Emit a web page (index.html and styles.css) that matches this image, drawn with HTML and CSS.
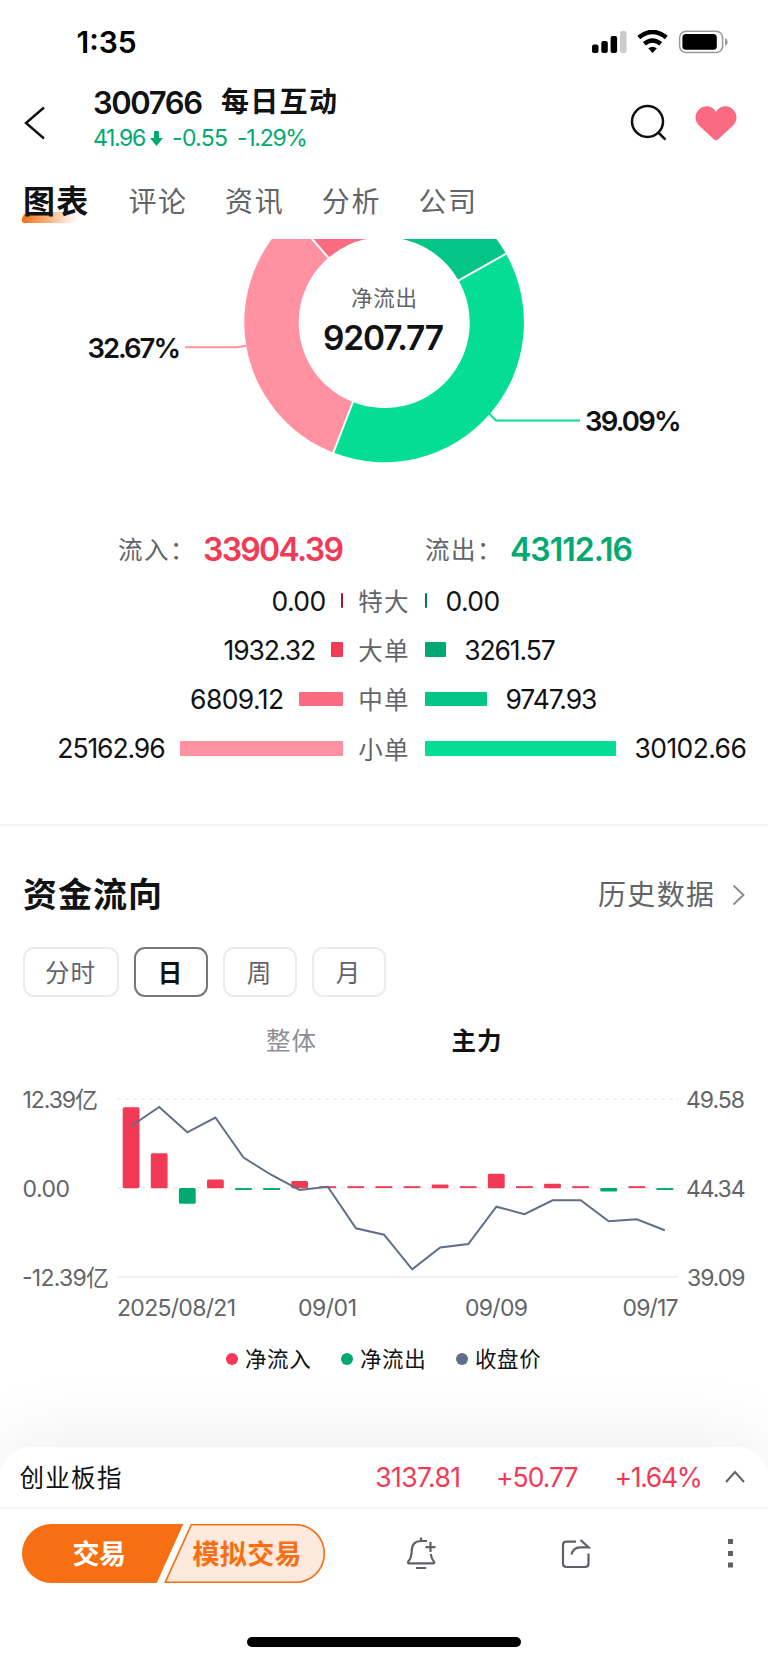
FILE: index.html
```
<!DOCTYPE html>
<html lang="zh-CN">
<head>
<meta charset="utf-8">
<meta name="viewport" content="width=device-width, initial-scale=1.0">
<title>300766 每日互动</title>
<link rel="stylesheet" href="styles.css">
</head>
<body>
<div class="status">
<span class="time">1:35</span>
<svg class="status-icons" width="140" height="24" viewBox="590 30 140 24">
<rect x="592" y="44.500" width="6.500" height="8.500" rx="2"/>
<rect x="601.300" y="41" width="6.500" height="12" rx="2"/>
<rect x="610.600" y="36" width="6.500" height="17" rx="2"/>
<rect x="620" y="31" width="6.500" height="22" rx="2" fill="#ccc"/>
<path d="M638.800 37.500Q652.500 26.500 666.300 37.500" fill="none" stroke="#000" stroke-width="4.600"/>
<path d="M644.300 43.800Q652.500 37 660.800 43.800" fill="none" stroke="#000" stroke-width="4.400"/>
<path d="M648.200 48.300Q652.500 45 656.900 48.300L652.500 53Z"/>
<rect x="679.600" y="31.300" width="43" height="21.300" rx="6.500" fill="none" stroke="#999" stroke-width="1.500"/>
<rect x="682.400" y="34" width="34.400" height="15.800" rx="3.500"/>
<path d="M725 38v8q2.700-1.200 2.700-4t-2.700-4z" fill="#999"/>
</svg>
</div>

<div class="header">
<svg class="back" width="24" height="36" viewBox="0 0 24 36"><path d="M21 2.500L3 18L21 33.500" fill="none" stroke="#111" stroke-width="2.400"/></svg>
<div class="stock">
<div class="stock-name"><span class="code">300766</span><span class="cname">每日互动</span></div>
<div class="quote"><span class="price">41.96</span><svg width="13" height="15" viewBox="0 0 13 15"><path d="M4 1q0-1 1-1h3q1 0 1 1v6h4L6.500 15L0 7h4z" fill="#00a971"/></svg><span class="chg">-0.55</span><span class="pct">-1.29%</span></div>
</div>
<svg class="search" width="38" height="38" viewBox="0 0 38 38"><circle cx="17.500" cy="17.500" r="15.500" fill="none" stroke="#111" stroke-width="2.500"/><path d="M28.300 28.500L35.500 35.700" stroke="#111" stroke-width="2.500"/></svg>
<svg class="heart" width="42" height="35" viewBox="0 0 42 35"><path d="M21 6C17-.8 9-1 4.500 3C-.8 7.500-.6 15 4 19.500L19 33.500Q21 35 23 33.500L38 19.500C42.600 15 42.800 7.500 37.500 3C33-1 25-.8 21 6Z" fill="#fa6a81"/></svg>
</div>

<div class="tabs">
<a class="tab active">图表</a>
<a class="tab">评论</a>
<a class="tab">资讯</a>
<a class="tab">分析</a>
<a class="tab">公司</a>
</div>

<svg class="donut" width="768" height="241" viewBox="0 239 768 241">
<path d="M292.800 216.500A139.800 139.800 0 0 0 333.300 452.600L352.900 402A85.300 85.300 0 0 1 328.500 257.800Z" fill="#ff91a1"/>
<path d="M292.800 216.500A139.800 139.800 0 0 1 384.200 182.500V237.200A85.300 85.300 0 0 0 328.500 257.800Z" fill="#fa6a81"/>
<path d="M384.200 182.500A139.800 139.800 0 0 1 506 253.800L458.600 280.600A85.300 85.300 0 0 0 384.200 237.200Z" fill="#04c585"/>
<path d="M506 253.800A139.800 139.800 0 0 1 333.300 452.600L352.900 402A85.300 85.300 0 0 0 458.600 280.600Z" fill="#04dd94"/>
<path d="M292 215.700L329.200 258.700M333 453.500L353.300 401M507 253.200L457.500 281.200" stroke="#fff" stroke-width="2"/>
<path d="M185 347.300H237L246 345.800" fill="none" stroke="#ff91a1" stroke-width="1.900"/>
<path d="M489.500 414L496 420.500H580" fill="none" stroke="#04dd94" stroke-width="1.900"/>
<text class="donut-label" x="351" y="306" textLength="66">净流出</text>
<text class="donut-total" x="323" y="349.500" textLength="121">9207.77</text>
<text class="donut-pct" x="87.500" y="357.500" textLength="93.500">32.67%</text>
<text class="donut-pct" x="585" y="430.500" textLength="96.500">39.09%</text>
</svg>

<div class="totals">
<div class="total"><span class="label">流入：</span><b class="in">33904.39</b></div>
<div class="total"><span class="label">流出：</span><b class="out">43112.16</b></div>
</div>

<div class="orders">
<div class="order">
<div class="side left"><span>0.00</span><i class="bar r1" style="width:2px"></i></div>
<span class="kind">特大</span>
<div class="side"><i class="bar g1" style="width:2px"></i><span>0.00</span></div>
</div>
<div class="order">
<div class="side left"><span class="tight">1932.32</span><i class="bar r2" style="width:12.500px"></i></div>
<span class="kind">大单</span>
<div class="side"><i class="bar g2" style="width:20.700px"></i><span class="tight">3261.57</span></div>
</div>
<div class="order">
<div class="side left"><span>6809.12</span><i class="bar r3" style="width:44px"></i></div>
<span class="kind">中单</span>
<div class="side"><i class="bar g3" style="width:62px"></i><span class="tight">9747.93</span></div>
</div>
<div class="order">
<div class="side left"><span class="tight">25162.96</span><i class="bar r4" style="width:163px"></i></div>
<span class="kind">小单</span>
<div class="side"><i class="bar g4" style="width:191px"></i><span>30102.66</span></div>
</div>
</div>

<div class="flow">
<div class="flow-head">
<h2>资金流向</h2>
<a class="history">历史数据<svg width="13" height="22" viewBox="0 0 13 22"><path d="M1.500 1.500L11.500 11L1.500 20.500" fill="none" stroke="#85878c" stroke-width="1.800"/></svg></a>
</div>
<div class="periods">
<a class="period wide">分时</a>
<a class="period on">日</a>
<a class="period">周</a>
<a class="period">月</a>
</div>
<div class="scope"><span>整体</span><span class="on">主力</span></div>
<svg class="chart" width="768" height="250" viewBox="0 1080 768 250">
<path d="M117 1099H678M117 1188H678" stroke="#ededee" stroke-width="1.500" stroke-dasharray="4 4"/>
<path d="M117 1277H678" stroke="#ededee" stroke-width="1.500"/>
<g fill="#f23a56">
<rect x="122.700" y="1107.300" width="16.800" height="81" rx="1.500"/>
<rect x="150.800" y="1153.200" width="16.800" height="35" rx="1.500"/>
<rect x="207" y="1179.500" width="16.800" height="8.700" rx="1.500"/>
<rect x="291.200" y="1181" width="16.800" height="7.200" rx="1.500"/>
<rect x="319.300" y="1186.200" width="16.800" height="1.900"/>
<rect x="347.400" y="1186.200" width="16.800" height="1.900"/>
<rect x="375.500" y="1186.200" width="16.800" height="1.900"/>
<rect x="403.600" y="1186.200" width="16.800" height="1.900"/>
<rect x="431.700" y="1184.600" width="16.800" height="3.600" rx="1"/>
<rect x="459.800" y="1186.200" width="16.800" height="1.900"/>
<rect x="487.900" y="1173.700" width="16.800" height="14.500" rx="1.500"/>
<rect x="516" y="1186.200" width="16.800" height="1.900"/>
<rect x="544.100" y="1183.700" width="16.800" height="4.500" rx="1"/>
<rect x="572.200" y="1186.200" width="16.800" height="1.900"/>
<rect x="628.400" y="1186.200" width="16.800" height="1.900"/>
</g>
<g fill="#00a971">
<rect x="178.900" y="1188" width="16.800" height="15.700" rx="1.500"/>
<rect x="235.100" y="1188.100" width="16.800" height="1.900"/>
<rect x="263.200" y="1188.100" width="16.800" height="1.900"/>
<rect x="600.300" y="1188" width="16.800" height="3.600" rx="1"/>
<rect x="656.500" y="1188.100" width="16.800" height="1.900"/>
</g>
<polyline points="131.300,1126 159.200,1107 187.300,1132.300 215.400,1117.500 243.500,1157.500 271.500,1175 299.600,1190 327.800,1186.800 356,1228.300 384,1234.700 412.200,1269.300 440.200,1247.500 468.300,1244 496.400,1206.700 524.500,1214.200 552.600,1200.300 580.700,1200.300 608.700,1221.200 636.800,1219.200 664.800,1230.200" fill="none" stroke="#5f6f89" stroke-width="2"/>
<g class="axis">
<text x="22.500" y="1108" textLength="75.500">12.39亿</text>
<text x="22.500" y="1197" textLength="47.500">0.00</text>
<text x="22" y="1286" textLength="87">-12.39亿</text>
<text x="686" y="1108" textLength="59">49.58</text>
<text x="686" y="1197" textLength="59.500">44.34</text>
<text x="687" y="1286" textLength="58.500">39.09</text>
<text x="117" y="1316" textLength="119">2025/08/21</text>
<text x="298" y="1316" textLength="59">09/01</text>
<text x="465" y="1316" textLength="63">09/09</text>
<text x="622.500" y="1316" textLength="56">09/17</text>
</g>
</svg>
<div class="legend">
<span><i class="dot red"></i>净流入</span>
<span><i class="dot green"></i>净流出</span>
<span><i class="dot blue"></i>收盘价</span>
</div>
</div>

<div class="footer">
<div class="index">
<span class="index-name">创业板指</span>
<span class="v1">3137.81</span><span class="v2">+50.77</span><span class="v3">+1.64%</span>
<svg width="20" height="13" viewBox="0 0 20 13"><path d="M1 12L10 2L19 12" fill="none" stroke="#5f6167" stroke-width="2"/></svg>
</div>
<div class="actions">
<svg class="trade" width="304" height="60" viewBox="22 1524 304 60">
<path d="M51.500 1524H183.300L156.700 1583H51.500A29.500 29.500 0 0 1 51.500 1524Z" fill="#f66f12"/>
<path d="M191.300 1524.700H295.500A28.700 28.700 0 0 1 295.500 1582.300H165.200Z" fill="#fde9dd" stroke="#f66f12" stroke-width="1.600"/>
<text x="72.500" y="1563.500" textLength="53.500" fill="#fff">交易</text>
<text x="192.500" y="1563.500" textLength="109" fill="#f66f12">模拟交易</text>
</svg>
<svg class="bell" width="32" height="36" viewBox="406 1536 32 36"><g fill="none" stroke="#5f6167" stroke-width="2.200"><path d="M421 1537.500V1541M427 1541H421Q412 1541 411.700 1551C411.600 1558 410 1559.500 408.200 1561.700Q407.500 1563.400 409.500 1563.400H433Q435 1563.400 434 1561.700C432.500 1560 431 1557.500 430.800 1554M416 1568H426M425.500 1547.200H435.500M430.500 1542V1552"/></g></svg>
<svg class="share" width="30" height="32" viewBox="561 1538 30 32"><g fill="none" stroke="#5f6167" stroke-width="2.200"><path d="M576 1541.700H566.500Q563 1541.700 563 1545V1563.500Q563 1567 566.500 1567H585Q588.500 1567 588.500 1563.500V1553.500M580.500 1540L588.500 1547.300H580Q573 1547.500 571.500 1554.500"/></g></svg>
<svg class="more" width="5" height="29" viewBox="0 0 5 29" fill="#5f6167"><rect width="5" height="5"/><rect y="12" width="5" height="5"/><rect y="23.500" width="5" height="5"/></svg>
</div>
<div class="home"></div>
</div>
</body>
</html>
```
FILE: styles.css
```
* { box-sizing: border-box; }
body { margin: 0; width: 768px; height: 1663px; overflow: hidden; background: #fff; color: #111214; font-family: Inter, "Noto Sans CJK SC", sans-serif; }
svg { display: block; flex: none; }

.status { display: flex; justify-content: space-between; height: 84px; padding: 23px 38px 0 76.5px; }
.time { font-size: 30px; font-weight: 600; line-height: 38px; color: #000; }
.status-icons { margin-top: 7px; }

.header { display: flex; height: 86px; padding-left: 23px; }
.back { margin-top: 21px; }
.stock { flex: none; width: 583px; padding-left: 46px; }
.stock-name { display: flex; height: 36px; line-height: 37px; font-weight: 600; }
.code { width: 128px; font-size: 31px; letter-spacing: -1.4px; }
.cname { font-size: 28px; font-weight: 700; letter-spacing: 1.3px; }
.quote { display: flex; align-items: center; height: 36px; font-size: 23px; letter-spacing: -1.4px; color: #00a971; }
.price { width: 57px; }
.chg { width: 65px; margin-left: 9px; letter-spacing: -.7px; }
.pct { letter-spacing: -1.3px; }
.search { margin-top: 20px; }
.heart { margin: 22px 0 0 27px; }

.tabs { display: flex; height: 69px; padding-left: 23px; line-height: 64px; font-size: 28px; letter-spacing: 1.6px; color: #626468; }
.tab { margin-right: 37.5px; }
.active { position: relative; z-index: 0; margin-right: 39px; font-size: 32px; letter-spacing: 1.2px; font-weight: 700; color: #111214; }
.active::before { content: ""; position: absolute; z-index: -1; left: -1px; top: 42px; width: 56px; height: 11px; border-radius: 8px 0 0 2px; background: linear-gradient(90deg, #f66f12, rgba(246,111,18,0)); }

.donut-label { font-size: 21.5px; fill: #626468; }
.donut-total { font-size: 33.5px; font-weight: 600; fill: #111214; }
.donut-pct { font-size: 27.5px; font-weight: 600; fill: #111214; }

.totals { display: flex; height: 96px; padding: 46px 0 0 118px; line-height: 48px; }
.total { display: flex; width: 307px; }
.label { width: 85px; font-size: 24.5px; letter-spacing: 1.5px; color: #626468; }
.total b { font-size: 32px; font-weight: 600; letter-spacing: -1.7px; }
.total .in { color: #f23a56; }
.total .out { letter-spacing: -1px; color: #00a971; }

.order { display: grid; grid-template-columns: 343px 82px 343px; align-items: center; height: 49.200px; font-size: 26.5px; letter-spacing: -.6px; }
.tight { letter-spacing: -1.1px; }
.side { display: flex; align-items: center; gap: 18.5px; }
.left { justify-content: flex-end; gap: 15.5px; }
.kind { text-align: center; font-size: 24.5px; letter-spacing: 1.2px; color: #626468; }
.bar { height: 14.700px; border-radius: 1px; }
.r1 { background: #a5132b; }
.r2 { background: #f23a56; }
.r3 { background: #fa6a81; }
.r4 { background: #ff91a1; }
.g1 { background: #007a4c; }
.g2 { background: #00a971; }
.g3 { background: #04c585; }
.g4 { background: #04dd94; }

.flow { margin-top: 51px; border-top: 2px solid #f6f6f7; }
.flow-head { display: flex; justify-content: space-between; height: 121px; padding: 44px 23px 0; line-height: 50px; }
.flow-head h2 { margin: 0; font-size: 34px; font-weight: 700; letter-spacing: 1px; line-height: 50px; }
.history { display: flex; align-items: center; gap: 16.5px; height: 50px; font-size: 28px; letter-spacing: 1.4px; color: #626468; }
.periods { display: flex; gap: 15px; padding-left: 22.5px; }
.period { width: 74px; height: 50px; border: 2px solid #ebecef; border-radius: 11px; text-align: center; line-height: 48px; font-size: 24.5px; letter-spacing: 1px; color: #626468; }
.wide { width: 96px; }
.period.on { border-color: #75777c; color: #111214; font-weight: 700; }
.scope { display: flex; height: 83px; padding: 22px 0 0 266px; line-height: 44px; font-size: 24.5px; letter-spacing: 1px; color: #8c8f95; }
.scope span { width: 185.5px; }
.scope .on { color: #111214; font-weight: 700; }
.axis { font-size: 23px; fill: #626468; }
.legend { display: flex; height: 58px; padding-left: 226px; line-height: 58px; font-size: 21.5px; letter-spacing: .6px; color: #111214; }
.legend span { display: flex; align-items: center; width: 115px; }
.dot { width: 12px; height: 12px; margin-right: 7px; border-radius: 50%; }
.red { background: #f23a56; }
.green { background: #00a971; }
.blue { background: #5f6f89; }

.footer { margin-top: 59px; height: 216px; border-radius: 30px 30px 0 0; background: #fff; box-shadow: 0 -4px 80px rgba(0,0,0,.08); }
.index { display: flex; align-items: center; height: 62px; padding-left: 19.5px; border-bottom: 2px solid #f6f6f7; font-size: 26.5px; letter-spacing: -.6px; color: #f23a56; }
.index-name { flex: none; width: 300px; font-size: 24.5px; letter-spacing: 1.3px; color: #111214; }
.v1 { width: 141px; text-align: right; }
.v2 { width: 117px; text-align: right; letter-spacing: -1px; }
.v3 { width: 124px; text-align: right; letter-spacing: -1.3px; }
.index svg { margin-left: 23px; }
.actions { display: flex; height: 128px; padding-left: 22px; }
.trade { margin-top: 15px; font-size: 27px; font-weight: 700; }
.bell { margin: 27px 0 0 80px; }
.share { margin: 29px 0 0 123px; }
.more { margin: 30px 0 0 137px; }
.home { width: 274px; height: 10px; margin: 0 auto; border-radius: 5px; background: #000; }
```
